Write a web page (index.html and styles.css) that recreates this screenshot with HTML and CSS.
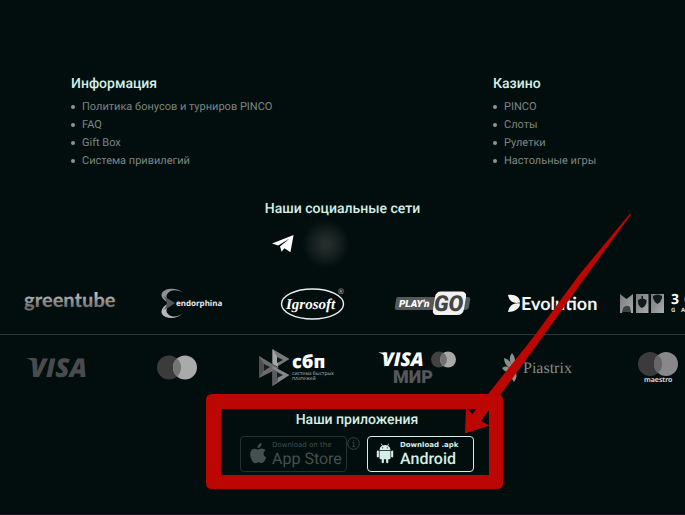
FILE: index.html
```html
<!DOCTYPE html>
<html lang="ru">
<head>
<meta charset="utf-8">
<meta name="viewport" content="width=device-width, initial-scale=1">
<title>PINCO</title>
<link rel="stylesheet" href="styles.css">
</head>
<body>
<footer class="footer">
  <div class="links">
    <nav class="links-col" aria-labelledby="info-title">
      <h2 class="title" id="info-title">Информация</h2>
      <ul class="list">
        <li><a href="#">Политика бонусов и турниров PINCO</a></li>
        <li><a href="#">FAQ</a></li>
        <li><a href="#">Gift Box</a></li>
        <li><a href="#">Система привилегий</a></li>
      </ul>
    </nav>
    <nav class="links-col" aria-labelledby="casino-title">
      <h2 class="title" id="casino-title">Казино</h2>
      <ul class="list">
        <li><a href="#">PINCO</a></li>
        <li><a href="#">Слоты</a></li>
        <li><a href="#">Рулетки</a></li>
        <li><a href="#">Настольные игры</a></li>
      </ul>
    </nav>
  </div>

  <section class="social">
    <h2 class="title">Наши социальные сети</h2>
    <div class="social-row">
      <a href="#" class="telegram" aria-label="Telegram">
        <svg width="22" height="18" viewBox="0 0 22 18"><path fill="#fff" d="M21.6 0 18.4 17.2 12.5 13.2 9.6 16.8 8 11.4 17.6 3.4 6.2 10.6 0 8.6Z"/></svg>
      </a>
      <span class="smudge"></span>
    </div>
  </section>

  <div class="logos providers">
    <svg class="logo" viewBox="0 0 120 60">
      <defs><linearGradient id="silver" x1="0" y1="0" x2="0" y2="1"><stop offset="0.2" stop-color="#c4c4c4"/><stop offset="0.8" stop-color="#6c6c6e"/></linearGradient></defs>
      <text class="greentube" x="12" y="33" fill="url(#silver)">greentube</text>
    </svg>
    <svg class="logo" viewBox="0 0 120 60">
      <path d="M51 19C45 13 33 14 30 19C28 23 32 27 38 29C35 25 33 22 36 19C40 15 47 16 51 19Z" fill="#8f9293"/>
      <path d="M51 39C45 46 33 45 30 40C28 36 32 31 38 29C35 33 33 37 36 40C40 44 47 43 51 39Z" fill="#b5b7b8"/>
      <path d="M31 22C36 24 39 27 43 29C39 32 36 34 31 36C36 32 36 27 31 22Z" fill="#515456"/>
      <text class="endorphina" x="44" y="32">endorphina</text>
    </svg>
    <svg class="logo" viewBox="0 0 120 60">
      <ellipse cx="60.500" cy="30" rx="31" ry="15" fill="none" stroke="#eee" stroke-width="1.400"/>
      <text class="igrosoft" x="34" y="35">Igrosoft</text>
      <text class="reg" x="86" y="20">®</text>
    </svg>
    <svg class="logo" viewBox="0 0 120 60">
      <path d="M26 23H96Q99 23 98 27L97 33Q96 36 93 36H25Q22 36 23 32L24 26Q24 23 26 23Z" fill="#55595a"/>
      <text class="playn" x="27" y="33">PLAY'n</text>
      <path d="M69 17.500H89Q95 17.500 94 23L92 35Q91 41 85 41H65Q60 41 61 35L63 23Q64 17.500 69 17.500Z" fill="#f2f2f2"/>
      <text class="go" x="62" y="37">GO</text>
    </svg>
    <svg class="logo" viewBox="0 0 120 60">
      <path d="M16 21C23 20 28 23 28 28.500C21 30 17 27 16 21Z" fill="#f5f5f5"/>
      <path d="M16 38C22 38 28 35 28 29.500C21 28 17 32 16 38Z" fill="#f5f5f5"/>
      <text class="evolution" x="29" y="36">Evolution</text>
    </svg>
    <svg class="logo" viewBox="0 0 120 60">
      <defs><linearGradient id="card" x1="0" y1="0" x2="1" y2="1"><stop offset="0" stop-color="#77797a"/><stop offset="1" stop-color="#a9abac"/></linearGradient></defs>
      <path d="M8 20 14.500 25 21 20V39H19Q18 35 14.500 34Q11 35 10 39H8Z" fill="url(#card)"/>
      <path d="M11 34Q14.500 30 18 33L19 38H10Z" fill="#3c4141"/>
      <rect x="24" y="20" width="12.500" height="19" fill="url(#card)"/>
      <rect x="39" y="20" width="13" height="19" fill="url(#card)"/>
      <path d="M26 26Q30 23 34.500 26V28Q34 32 30 34Q26 32 26 28ZM29.500 22H31V25H29.500Z" fill="#101c1b"/>
      <path d="M41 22Q45.500 19 50 22V24Q49 28 45.500 30Q42 28 41 24Z" fill="#101c1b"/>
      <text class="oaks" x="59" y="30">3</text><text class="oaks" x="72" y="30">OAKS</text>
      <text class="gaming" x="59" y="38">G</text><text class="gaming" x="69" y="38">A</text>
    </svg>
  </div>

  <div class="logos payments">
    <svg class="logo" viewBox="0 0 120 60">
      <text class="visa visa-dim" x="33" y="42">VISA</text>
      <path d="M29 23H38L41 33Q37 25 29 23Z" fill="#4a4b4e"/>
    </svg>
    <svg class="logo" viewBox="0 0 120 60">
      <circle cx="52" cy="32.500" r="12" fill="#3b3b3b"/><circle cx="68" cy="32.500" r="12" fill="#a9abaa"/>
      <path d="M60 23.500A12 12 0 0 1 60 41.500A12 12 0 0 1 60 23.500Z" fill="#747474"/>
    </svg>
    <svg class="logo" viewBox="0 0 120 60">
      <path d="M22 21 32 27 42 33 22 43Z" fill="#6d6a6c"/>
      <path d="M22 21 29 32 22 43Z" fill="#514e51"/>
      <path d="M35.500 14 52.500 24 41 31 35.500 28Z" fill="#77797a"/>
      <path d="M35.500 14 41 23V32L35.500 29Z" fill="#a5a7a7"/>
      <path d="M40 22 46 25 40 28Z" fill="#101b1a"/>
      <path d="M35.500 31 52.500 40 35.500 51Z" fill="#858788"/>
      <path d="M35.500 34 41 37V46L35.500 51Z" fill="#5a5b5d"/>
      <path d="M40 37 46 40 40 43ZM27 29 33 32 27 36Z" fill="#152120"/>
      <text class="sbp" x="55" y="33">сбп</text>
      <text class="sbp-sub" x="55" y="40">система быстрых</text>
      <text class="sbp-sub" x="55" y="45">платежей</text>
    </svg>
    <svg class="logo" viewBox="0 0 120 60">
      <text class="visa visa-small" x="25" y="31">VISA</text>
      <path d="M21 17.500H29L31 25Q28 19 21 17.500Z" fill="#fff"/>
      <circle cx="82" cy="24.500" r="8" fill="#414141"/><circle cx="91" cy="24.500" r="8" fill="#a8a8a8"/>
      <path d="M86.500 18A8 8 0 0 1 86.500 31A8 8 0 0 1 86.500 18Z" fill="#707070"/>
      <text class="mir" x="36" y="48">МИР</text>
    </svg>
    <svg class="logo" viewBox="0 0 120 60">
      <g fill="#8c9190">
        <path d="M36 33Q30 24 35 18Q41 24 36 33Z"/>
        <path d="M35 34Q27 31 27 23Q35 25 35 34Z"/>
        <path d="M35 36Q29 39 25 33Q31 29 35 36Z"/>
        <path d="M34 36Q35 43 28 44Q27 37 34 36Z"/>
        <path d="M37 35Q42 40 37 47Q32 41 37 35Z"/>
        <path d="M38 32Q37 25 42 22Q44 28 38 32Z"/>
      </g>
      <text class="piastrix" x="46" y="38">Piastrix</text>
    </svg>
    <svg class="logo" viewBox="0 0 120 60">
      <circle cx="53" cy="29" r="12" fill="#3c3a3d"/><circle cx="69" cy="29" r="12" fill="#888789"/>
      <path d="M61 20A12 12 0 0 1 61 38A12 12 0 0 1 61 20Z" fill="#666567"/>
      <text class="maestro" x="47" y="47">maestro</text>
    </svg>
  </div>

  <section class="apps">
    <div class="apps-inner">
      <h2 class="title">Наши приложения</h2>
      <div class="apps-row">
        <a href="#" class="app app-off">
          <svg width="18" height="22" viewBox="0 0 18 22"><path fill="currentColor" d="M12.600 0Q12.800 2.200 11.400 3.700Q10.200 5 8.500 5Q8.300 3.200 9.700 1.700Q10.900.3 12.600 0ZM16.500 7.200Q14.500 8.500 14.500 10.800Q14.600 13.600 17.200 14.600Q16.400 17 14.900 18.800Q13.900 20.100 12.600 20.100Q11.800 20.100 11 19.700Q9.500 19 8 19.700Q7 20.200 6.200 20.200Q4.700 20.200 3.200 18Q1.200 15.200 1.100 11.800Q1 8.800 2.600 7.100Q3.900 5.700 5.700 5.700Q6.700 5.700 7.700 6.200Q9.100 6.800 10.500 6.100Q11.700 5.500 12.900 5.500Q15.300 5.600 16.500 7.200Z"/></svg>
          <span class="app-text"><span class="app-small">Download on the</span><span class="app-big">App Store</span></span>
        </a>
        <svg class="info" width="13" height="13" viewBox="0 0 13 13"><circle cx="6.500" cy="6.500" r="5.800" fill="none" stroke="currentColor"/><path d="M5.500 5.500H6.800V9.500M5.300 9.500H8.200M6.200 3.300H7.300" fill="none" stroke="currentColor"/></svg>
        <a href="#" class="app app-on">
          <svg width="18" height="22" viewBox="0 0 18 22"><g fill="currentColor"><path d="M3.500 7Q3.500 4 6 2.700L4.900.8 5.500.5 6.700 2.400Q9 1.500 11.300 2.400L12.500.5 13.100.8 12 2.700Q14.500 4 14.500 7Z"/><path d="M3.500 7.700H14.500V15.200Q14.500 16.300 13.400 16.300H12.300V19Q12.300 20.200 11.200 20.200T10.100 19V16.300H7.900V19Q7.900 20.200 6.800 20.200T5.700 19V16.300H4.600Q3.500 16.300 3.500 15.200Z"/><rect x=".8" y="7.500" width="2.100" height="7" rx="1"/><rect x="15.100" y="7.500" width="2.100" height="7" rx="1"/></g><circle cx="6.700" cy="4.800" r=".6" fill="#010e0d"/><circle cx="11.300" cy="4.800" r=".6" fill="#010e0d"/></svg>
          <span class="app-text"><span class="app-small">Download .apk</span><span class="app-big">Android</span></span>
        </a>
      </div>
      <svg class="callout" width="425" height="276" viewBox="206 213 425 276" aria-hidden="true">
        <path fill="#bb0602" fill-rule="evenodd" d="M212 394H497Q503 394 503 400V483Q503 489 497 489H212Q206 489 206 483V400Q206 394 212 394ZM221 409V475H489V409Z"/>
        <path fill="#bb0602" d="M630 213.500 631 214.500 587 275 544 335 501 394 481 421 489.500 425.500 465 433.500 466 408 472.500 414 488 394 535 335 579 275Z"/>
      </svg>
    </div>
  </section>
</footer>
</body>
</html>
```

FILE: styles.css
```css
* {
  box-sizing: border-box;
}

body {
  margin: 0;
  background: #010e0d;
  color: #d5efe7;
  font-family: Roboto, "Liberation Sans", sans-serif;
  text-rendering: geometricPrecision;
  overflow-x: hidden;
}

a {
  color: inherit;
  text-decoration: none;
}

.footer {
  min-height: 100vh;
  padding-top: 74px;
  border-bottom: 1px solid #1b1722;
  overflow: hidden;
}

.title {
  margin: 0;
  font-size: 14px;
  line-height: 20px;
  font-weight: 500;
}

.links {
  display: grid;
  grid-template-columns: 1fr 192px;
  padding-left: 71px;
}

.list {
  margin: 4px 0 0;
  padding: 0 0 0 11px;
  color: #7c8684;
  font-size: 11px;
  line-height: 18px;
  list-style: none;
}

.list li::before {
  content: "";
  float: left;
  width: 4px;
  height: 4px;
  margin: 7px 0 0 -11px;
  border-radius: 50%;
  background: #8d9694;
}

.social {
  margin-top: 29px;
  text-align: center;
}

.social-row {
  display: flex;
  align-items: center;
  gap: 8px;
  width: 141px;
  height: 50px;
  margin: 0 auto;
}

.telegram svg {
  display: block;
}

.smudge {
  width: 48px;
  height: 48px;
  background: radial-gradient(closest-side, #252d2c 15%, #1a2322 45%, #010e0d 100%);
}

.logos {
  display: flex;
}

.logo {
  flex: none;
  width: 120px;
  height: 60px;
}

.providers {
  padding-left: 12px;
  margin-top: 5px;
  border-bottom: 1px solid #2b3937;
}

.payments {
  margin-left: -3px;
}

.greentube {
  font: 900 20px Lato, sans-serif;
}

.endorphina {
  font: 700 8px "Noto Sans", sans-serif;
  fill: #e8e8e8;
}

.igrosoft {
  font: italic 700 15px "Liberation Serif", serif;
  fill: #fff;
}

.reg {
  font: 700 8px "Liberation Sans", sans-serif;
  fill: #a5a9a9;
}

.playn {
  font: italic 900 10px Roboto, sans-serif;
  fill: #fff;
}

.go {
  font: italic 900 22px Roboto, sans-serif;
  fill: #434647;
}

.evolution {
  font: 700 18px Lato, sans-serif;
  fill: #f5f5f5;
}

.oaks {
  font: 700 14px "Noto Sans", sans-serif;
  fill: #fff;
}

.gaming {
  font: 700 6px "Noto Sans", sans-serif;
  fill: #ddd;
}

.visa {
  font: italic 800 26px "Open Sans", sans-serif;
  fill: #fff;
}

.visa-dim {
  fill: #4a4b4e;
}

.visa-small {
  font-size: 19px;
}

.sbp {
  font: 800 18px "Open Sans", sans-serif;
  fill: #fff;
}

.sbp-sub {
  font: 400 5px "Open Sans", sans-serif;
  fill: #b3b8b7;
}

.mir {
  font: 900 18px Roboto, sans-serif;
  fill: #555759;
}

.piastrix {
  font: 400 16px "Liberation Serif", serif;
  fill: #838b89;
}

.maestro {
  font: 600 7px "Noto Sans", sans-serif;
  fill: #e4e4e4;
}

.apps {
  display: flex;
  justify-content: center;
  padding: 15px 0 24px 29px;
}

.apps-inner {
  position: relative;
  text-align: center;
}

.apps-row {
  display: flex;
  align-items: flex-start;
  margin-top: 6px;
}

.app {
  display: flex;
  align-items: center;
  gap: 5px;
  width: 107px;
  height: 36px;
  padding-left: 8px;
  border: 1px solid currentColor;
  border-radius: 4px;
  text-align: left;
}

.app-off {
  color: #43504e;
  border-color: #26322f;
}

.app-on {
  gap: 6px;
  margin-left: 7px;
}

.app-text {
  display: flex;
  flex-direction: column;
  white-space: nowrap;
}

.app-small {
  font: 700 7px/9px "DejaVu Sans", sans-serif;
}

.app-off .app-small {
  font-weight: 400;
}

.app-big {
  font-size: 16px;
  line-height: 17px;
}

.app-on .app-big {
  font-weight: 500;
}

.info {
  margin-top: 1px;
  color: #384543;
}

/* Highlight frame and arrow drawn over the download block */
.callout {
  position: absolute;
  left: -34px;
  bottom: -17px;
  z-index: 1;
  pointer-events: none;
}
```
